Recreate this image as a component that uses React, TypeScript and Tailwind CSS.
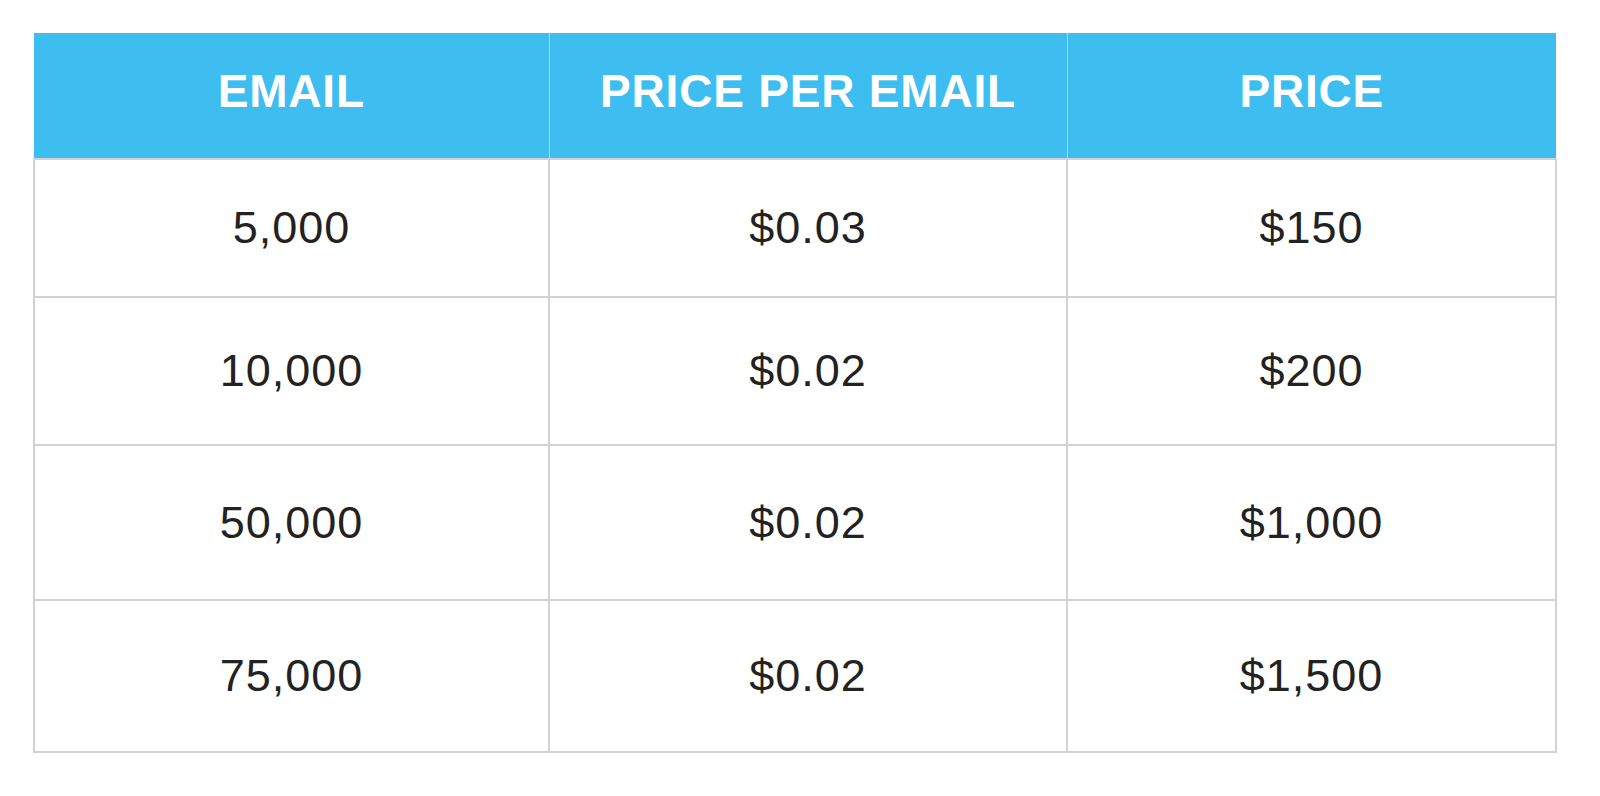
const rows = [
  { h: "h-[138px]", email: "5,000", per: "$0.03", price: "$150" },
  { h: "h-[148px]", email: "10,000", per: "$0.02", price: "$200" },
  { h: "h-[155px]", email: "50,000", per: "$0.02", price: "$1,000" },
  { h: "h-[152px]", email: "75,000", per: "$0.02", price: "$1,500" },
];

const App = () => {
  return (
    <div className="w-[1600px] h-[796px] bg-white pt-[33px] pl-[33px] font-['Liberation_Sans',Arial,sans-serif]">
      <table className="w-[1522px] table-fixed border-collapse">
        <colgroup>
          <col className="w-[515px]" />
          <col className="w-[518px]" />
          <col className="w-[489px]" />
        </colgroup>
        <thead>
          <tr className="h-[126px] bg-[#3dbdf0]">
            <th className="pb-2 text-center text-[46px] tracking-[0.8px] font-bold text-white">EMAIL</th>
            <th className="border-x border-[#9edcf7] pb-2 text-center text-[46px] tracking-[0.8px] font-bold text-white">
              PRICE PER EMAIL
            </th>
            <th className="pb-2 text-center text-[46px] tracking-[0.8px] font-bold text-white">PRICE</th>
          </tr>
        </thead>
        <tbody>
          {rows.map((r) => (
            <tr key={r.email} className={r.h}>
              <td className="border-2 border-[#d2d2d2] text-center text-[45px] tracking-[1px] text-[#222]">
                {r.email}
              </td>
              <td className="border-2 border-[#d2d2d2] text-center text-[45px] tracking-[1px] text-[#222]">
                {r.per}
              </td>
              <td className="border-2 border-[#d2d2d2] text-center text-[45px] tracking-[1px] text-[#222]">
                {r.price}
              </td>
            </tr>
          ))}
        </tbody>
      </table>
    </div>
  );
};

export default App;
